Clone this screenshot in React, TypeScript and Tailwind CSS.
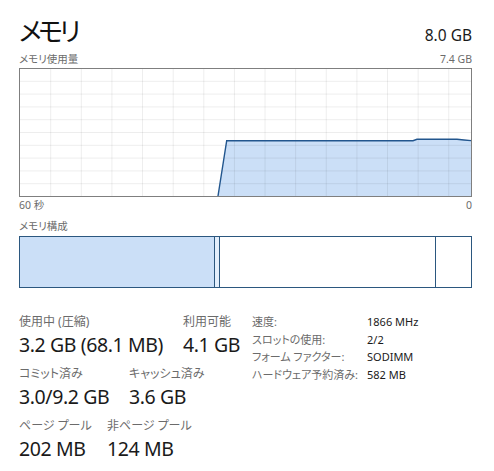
import React from "react"

const FONT = "[font-family:'Noto_Sans','Noto_Sans_CJK_JP',sans-serif] [font-feature-settings:'palt']"

const W = 453
const H = 129

// polyline of the usage graph, relative to the chart box
const usage: [number, number][] = [
  [199, 128],
  [207.7, 72.7],
  [394, 72.7],
  [398, 71.3],
  [438, 71.3],
  [445, 72],
  [452, 72.6],
]

function UsageChart() {
  const vLines = Array.from({ length: 14 }, (_, i) => 31.7 + i * 30.62)
  const hLines = Array.from({ length: 9 }, (_, i) => 0.5 + (i + 1) * 12.8)
  const pts = usage.map(([x, y]) => `${x},${y}`).join(" ")
  const area = `${pts} 452,128`
  return (
    <svg width={W} height={H} viewBox={`0 0 ${W} ${H}`} className="block">
      <rect x="0" y="0" width={W} height={H} fill="#ffffff" />
      <polygon points={area} fill="#cbdff7" />
      {vLines.map((x) => (
        <line key={"v" + x} x1={x} y1={1} x2={x} y2={H - 1} stroke="rgba(0,0,0,0.07)" strokeWidth="1" />
      ))}
      {hLines.map((y) => (
        <line key={"h" + y} x1={1} y1={y} x2={W - 1} y2={y} stroke="rgba(0,0,0,0.07)" strokeWidth="1" />
      ))}
      <polyline points={pts} fill="none" stroke="#22568e" strokeWidth="1.4" />
      <rect x="0.5" y="0.5" width={W - 1} height={H - 1} fill="none" stroke="#7f7f7f" strokeWidth="1" />
    </svg>
  )
}

function CompositionBar() {
  return (
    <div className="flex h-[52px] w-[453px] border border-[#2b577f]">
      <div className="w-[195px] shrink-0 bg-[#cbdff7] border-r border-[#2b577f]" />
      <div className="w-[5px] shrink-0 bg-[#e3eefb] border-r border-[#2b577f]" />
      <div className="w-[216px] shrink-0 bg-white border-r border-[#2b577f]" />
      <div className="flex-1 bg-white" />
    </div>
  )
}

function Stat({ label, value, className = "" }: { label: string; value: string; className?: string }) {
  return (
    <div className={`flex flex-col ${className}`}>
      <span className="text-[12px] leading-[18px] text-[#6b6b6b] whitespace-nowrap">{label}</span>
      <span className="text-[19.5px] leading-[28px] tracking-[-0.4px] text-[#1a1a1a] whitespace-nowrap">{value}</span>
    </div>
  )
}

const specs = [
  ["速度:", "1866 MHz"],
  ["スロットの使用:", "2/2"],
  ["フォーム ファクター:", "SODIMM"],
  ["ハードウェア予約済み:", "582 MB"],
]

export default function App() {
  return (
    <div className={`w-[494px] h-[471px] bg-white pl-[19px] pr-[22px] pt-[11px] ${FONT}`}>
      <div className="flex items-baseline justify-between">
        <h1 className="text-[26px] leading-[40px] tracking-[-3.5px] text-[#111]">メモリ</h1>
        <span className="text-[15.5px] text-[#1a1a1a]">8.0 GB</span>
      </div>
      <div className="flex justify-between text-[10.5px] leading-[16px] text-[#6b6b6b]">
        <span>メモリ使用量</span>
        <span>7.4 GB</span>
      </div>
      <div className="mt-[1px]">
        <UsageChart />
      </div>
      <div className="flex justify-between text-[10.5px] leading-[16px] text-[#6b6b6b]">
        <span>60 秒</span>
        <span>0</span>
      </div>
      <div className="mt-[5px] text-[10.5px] leading-[16px] text-[#6b6b6b]">メモリ構成</div>
      <div className="mt-[2px]">
        <CompositionBar />
      </div>
      <div className="mt-[25px] flex">
        <div className="w-[233px] shrink-0 flex flex-col gap-[6px]">
          <div className="flex">
            <Stat label="使用中 (圧縮)" value="3.2 GB (68.1 MB)" className="w-[164px]" />
            <Stat label="利用可能" value="4.1 GB" />
          </div>
          <div className="flex">
            <Stat label="コミット済み" value="3.0/9.2 GB" className="w-[110px]" />
            <Stat label="キャッシュ済み" value="3.6 GB" />
          </div>
          <div className="flex">
            <Stat label="ページ プール" value="202 MB" className="w-[88px]" />
            <Stat label="非ページ プール" value="124 MB" />
          </div>
        </div>
        <div className="flex flex-col text-[11px] leading-[17.7px]">
          {specs.map(([k, v]) => (
            <div key={k} className="flex">
              <span className="w-[115px] shrink-0 whitespace-nowrap text-[#6b6b6b]">{k}</span>
              <span className="text-[#1a1a1a]">{v}</span>
            </div>
          ))}
        </div>
      </div>
    </div>
  )
}
